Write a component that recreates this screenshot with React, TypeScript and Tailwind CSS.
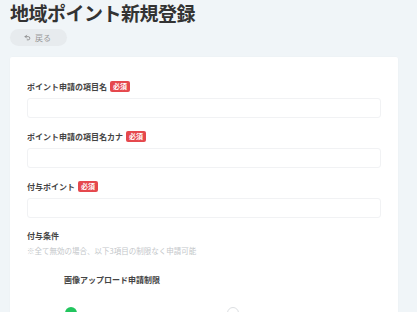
import { Undo2 } from "lucide-react";

const FONT = { fontFamily: '"Noto Sans CJK JP", "Noto Sans", sans-serif' };

function Badge() {
  return (
    <span className="inline-flex h-[11px] items-center rounded-[2px] bg-[#e5484d] px-[3px] text-[7px] font-bold leading-none text-white">
      必須
    </span>
  );
}

function Field({ label }: { label: string }) {
  return (
    <div className="mb-[13px]">
      <div className="flex h-[11px] items-center gap-[3px]">
        <span className="text-[8px] font-bold leading-none text-[#444]">{label}</span>
        <Badge />
      </div>
      <div className="mt-[6px] h-[20px] rounded-[3px] border border-[#f1f2f4] bg-white" />
    </div>
  );
}

export default function App() {
  return (
    <div className="min-h-screen overflow-hidden bg-[#f0f5f8] pl-[10px] pr-[19px] pt-[1px]" style={FONT}>
      <h1 className="text-[19px] font-bold leading-[24px] tracking-[-0.5px] text-[#333]">地域ポイント新規登録</h1>

      <button className="mt-[4px] flex h-[17px] w-[57px] items-center gap-[4px] rounded-full bg-[#e7ebee] pl-[14px] text-[8px] text-[#999]">
        <Undo2 size={7} strokeWidth={3} className="text-[#888]" />
        <span>戻る</span>
      </button>

      <div className="mt-[11px] h-[300px] rounded-[2px] bg-white px-[17px] pt-[24px] shadow-[0_0_2px_rgba(0,0,0,0.03)]">
        <Field label="ポイント申請の項目名" />
        <Field label="ポイント申請の項目名カナ" />
        <Field label="付与ポイント" />

        <div className="mt-[2px] text-[8px] font-bold leading-[10px] text-[#444]">付与条件</div>
        <div className="mt-[5px] text-[7.5px] leading-[10px] text-[#c4c7ca]">
          ※全て無効の場合、以下3項目の制限なく申請可能
        </div>

        <div className="mt-[19px] pl-[37px] text-[8px] font-bold leading-[10px] text-[#444]">
          画像アップロード申請制限
        </div>

        <div className="mt-[22px] flex items-center pl-[38px]">
          <span className="h-[12px] w-[12px] rounded-full bg-[#22c55e]" />
          <span className="ml-[150px] h-[12px] w-[12px] rounded-full border border-[#dcdfe2] bg-white" />
        </div>
      </div>
    </div>
  );
}
